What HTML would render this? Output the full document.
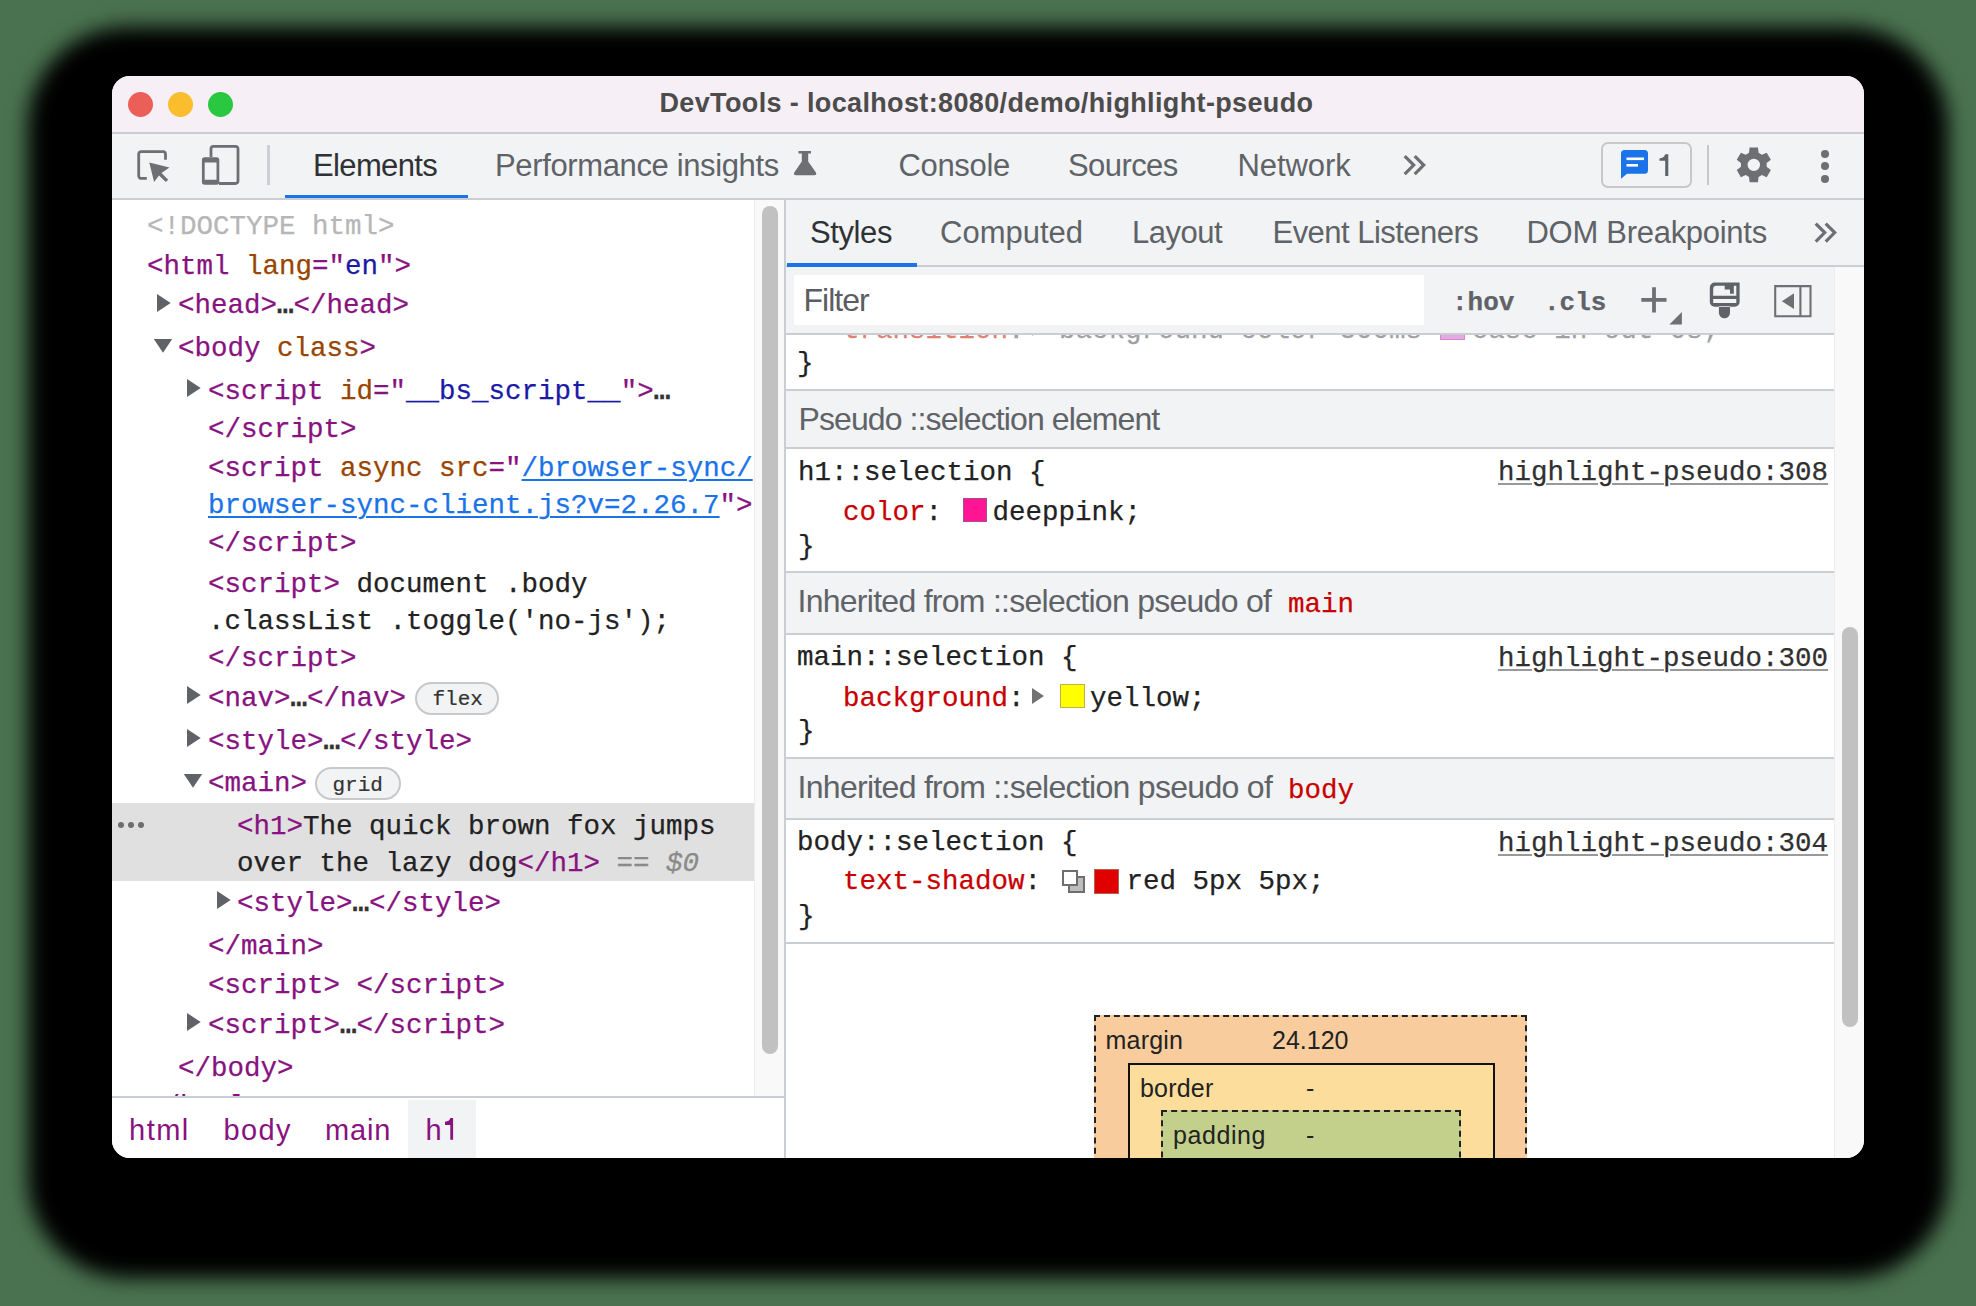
<!DOCTYPE html>
<html><head><meta charset="utf-8">
<style>
*{margin:0;padding:0;box-sizing:border-box}
html,body{width:1976px;height:1306px;overflow:hidden;background:#4a7250}
body{position:relative;font-family:"Liberation Sans",sans-serif}
.shadow{position:absolute;left:27.5px;top:27px;width:1920.5px;height:1251px;border-radius:100px;background:#000;filter:blur(10px)}
.win{position:absolute;left:112px;top:76px;width:1752px;height:1082px;border-radius:18px;overflow:hidden;background:#fff}
.a{position:absolute}
.m{position:absolute;font-family:"Liberation Mono",monospace;font-size:27.5px;line-height:32px;white-space:pre;color:#222;-webkit-text-stroke:0.25px currentColor}
.s{position:absolute;line-height:34px;white-space:pre;font-family:"Liberation Sans",sans-serif}
.b{font-weight:bold}
.tg{color:#881280}.at{color:#994500}.av{color:#1a1aa6}.gr{color:#b6b6b6}.tx{color:#222}
.el{color:#333;font-weight:bold}
.ln{color:#1a73e8;text-decoration:underline;text-decoration-thickness:2px;text-underline-offset:3px}
.gr2{color:#8a8a8a}.it{font-style:italic}
.pr{color:#c80000}.pr2{color:#e08070}.gr3{color:#a0a0a0}
.src{color:#303030;text-decoration:underline;text-decoration-color:#999;text-decoration-thickness:2px;text-underline-offset:3px}
.sw{background:#e4a8e0}
.badge{position:absolute;border:2px solid #c8c8c8;border-radius:17px;background:#f1f3f4;font-family:"Liberation Mono",monospace;font-size:21px;line-height:32px;color:#333;white-space:pre;-webkit-text-stroke:0.2px #333}
</style></head><body>
<div class="shadow"></div>
<div class="win">
<div class="a" style="left:0px;top:0px;width:1752px;height:56px;background:#f6f0f6"></div><div class="a" style="left:0px;top:56px;width:1752px;height:1.5px;background:#cbcdd0"></div><div class="a" style="left:0px;top:57.5px;width:1752px;height:64.5px;background:#f1f3f4"></div><div class="a" style="left:0px;top:122px;width:1752px;height:2px;background:#cacdd1"></div><div class="a" style="left:15.5px;top:15.5px;width:25px;height:25px;border-radius:50%;background:#ec5f58"></div><div class="a" style="left:55.5px;top:15.5px;width:25px;height:25px;border-radius:50%;background:#f9bd2e"></div><div class="a" style="left:95.5px;top:15.5px;width:25px;height:25px;border-radius:50%;background:#29c840"></div><div id="t1" class="s" style="left:547.50px;top:10px;font-size:27px;color:#4c4c4c;font-weight:bold;letter-spacing:0.358px;">DevTools - localhost:8080/demo/highlight-pseudo</div><svg class="a" style="left:18px;top:64px" width="50" height="50" viewBox="130 140 50 50"><path d="M146.8 178.4 H141.3 a2.6 2.6 0 0 1 -2.6 -2.6 V154.2 a2.6 2.6 0 0 1 2.6 -2.6 H162.9 a2.6 2.6 0 0 1 2.6 2.6 V159.7" fill="none" stroke="#6e6f73" stroke-width="2.8"/>
<path d="M149.3 162.5 L169.5 167.4 L161.5 173 L168.2 179.7 L165.8 182.1 L159 175.4 L154.1 182 Z" fill="#6e6f73"/></svg><svg class="a" style="left:83px;top:64px" width="50" height="50" viewBox="195 140 50 50"><path d="M211 157 V148.8 a2.5 2.5 0 0 1 2.5 -2.5 H235.5 a2.5 2.5 0 0 1 2.5 2.5 V181 a2.5 2.5 0 0 1 -2.5 2.5 H219" fill="none" stroke="#6e6f73" stroke-width="2.8"/>
<path d="M205 157.3 H216.5 a2.8 2.8 0 0 1 2.8 2.8 V182 a2.8 2.8 0 0 1 -2.8 2.8 H204.7 a2.8 2.8 0 0 1 -2.8 -2.8 V160.1 a2.8 2.8 0 0 1 2.8 -2.8 Z M204.7 162.6 V179.8 H216.5 V162.6 Z" fill="#6e6f73" fill-rule="evenodd"/></svg><div class="a" style="left:155px;top:69px;width:3px;height:40px;background:#cdcfd2"></div><div id="t2" class="s" style="left:201.00px;top:73px;font-size:31px;color:#303134;font-weight:normal;letter-spacing:-0.643px;">Elements</div><div class="a" style="left:173px;top:119px;width:183px;height:3px;background:#1a73e8"></div><div id="t3" class="s" style="left:383.00px;top:73px;font-size:31px;color:#5f6368;font-weight:normal;letter-spacing:-0.367px;">Performance insights</div><svg class="a" style="left:678px;top:72px" width="32" height="32" viewBox="790 148 32 32"><path d="M798.5 151 H811 V153.4 H808.2 V161.5 L815.6 172 Q817.5 175.2 814 175.2 H796.2 Q792.7 175.2 794.6 172 L801.8 161.5 V153.4 H798.5 Z" fill="#6e6f73"/></svg><div id="t4" class="s" style="left:786.50px;top:73px;font-size:31px;color:#5f6368;font-weight:normal;letter-spacing:-0.334px;">Console</div><div id="t5" class="s" style="left:956.00px;top:73px;font-size:31px;color:#5f6368;font-weight:normal;letter-spacing:-0.583px;">Sources</div><div id="t6" class="s" style="left:1125.50px;top:73px;font-size:31px;color:#5f6368;font-weight:normal;letter-spacing:-0.083px;">Network</div><svg class="a" style="left:1286px;top:74px" width="36" height="30" viewBox="1398 150 36 30"><path d="M1404.7 156.1 L1413.7 165.1 L1404.7 174.1 M1414.7 156.1 L1423.7 165.1 L1414.7 174.1" fill="none" stroke="#6e6f73" stroke-width="3.2"/></svg><div class="a" style="left:1489px;top:66px;width:91px;height:46px;border:2.5px solid #c6c8cb;border-radius:7px"></div><svg class="a" style="left:1506px;top:70px" width="34" height="36" viewBox="1618 146 34 36"><path d="M1624.5 150 H1644.5 a3.5 3.5 0 0 1 3.5 3.5 V170.3 a3.5 3.5 0 0 1 -3.5 3.5 H1627 L1621 178.8 V153.5 a3.5 3.5 0 0 1 3.5 -3.5 Z" fill="#1a73e8"/><rect x="1626.5" y="157.5" width="17.5" height="2.6" fill="#fff"/><rect x="1626.5" y="164" width="11.5" height="2.6" fill="#fff"/></svg><svg class="a" style="left:1543px;top:74px" width="20" height="30" viewBox="1655 150 20 30"><path d="M1665.2 154.2 H1668.3 V176 H1665.2 V160.8 H1659.5 V158.2 Q1664 158 1665.2 154.2 Z" fill="#5f6368"/></svg><div class="a" style="left:1595px;top:69px;width:2px;height:40px;background:#c6c8cb"></div><svg class="a" style="left:1618px;top:65px" width="48" height="48" viewBox="1730 141 48 48"><path d="M1749.01 152.81 L1749.64 147.59 L1757.96 147.59 L1758.59 152.81 L1761.87 154.71 L1766.71 152.65 L1770.87 159.84 L1766.66 163.00 L1766.66 166.80 L1770.87 169.96 L1766.71 177.15 L1761.87 175.09 L1758.59 176.99 L1757.96 182.21 L1749.64 182.21 L1749.01 176.99 L1745.73 175.09 L1740.89 177.15 L1736.73 169.96 L1740.94 166.80 L1740.94 163.00 L1736.73 159.84 L1740.89 152.65 L1745.73 154.71 Z M1760.0 164.9 A6.2 6.2 0 1 0 1747.6 164.9 A6.2 6.2 0 1 0 1760.0 164.9 Z" fill="#6e6f73" fill-rule="evenodd"/></svg><div class="a" style="left:1709px;top:73.5px;width:8px;height:8px;border-radius:50%;background:#6e6f73"></div><div class="a" style="left:1709px;top:86px;width:8px;height:8px;border-radius:50%;background:#6e6f73"></div><div class="a" style="left:1709px;top:98.5px;width:8px;height:8px;border-radius:50%;background:#6e6f73"></div><div class="a" style="left:0px;top:124px;width:672px;height:898px;background:#fff"></div><div class="a" style="left:642px;top:124px;width:30px;height:898px;background:#f9f9fa;border-left:1px solid #ececec"></div><div class="a" style="left:650px;top:130px;width:16px;height:848px;border-radius:8px;background:#c1c1c1"></div><div class="a" style="left:672px;top:124px;width:2px;height:958px;background:#cacdd1"></div><div class="a" style="left:0px;top:727px;width:642px;height:78px;background:#e0e0e0"></div><div class="a" style="left:5.799999999999997px;top:745.5px;width:6.6px;height:6.6px;border-radius:50%;background:#6e6e6e"></div><div class="a" style="left:15.899999999999991px;top:745.5px;width:6.6px;height:6.6px;border-radius:50%;background:#6e6e6e"></div><div class="a" style="left:25.899999999999977px;top:745.5px;width:6.6px;height:6.6px;border-radius:50%;background:#6e6e6e"></div><div class="m" style="left:35px;top:135px;"><span class="gr">&lt;!DOCTYPE html&gt;</span></div><div class="m" style="left:35px;top:175px;"><span class="tg">&lt;html</span> <span class="at">lang</span><span class="tg">="</span><span class="av">en</span><span class="tg">"&gt;</span></div><svg class="a" style="left:44px;top:218px" width="16" height="19" viewBox="0 0 16 19"><path d="M1 0 L14.7 9 L1 18 Z" fill="#5f6368"/></svg><div class="m" style="left:66px;top:214px;"><span class="tg">&lt;head&gt;</span><span class="el">…</span><span class="tg">&lt;/head&gt;</span></div><svg class="a" style="left:41px;top:262px" width="20" height="16" viewBox="0 0 20 16"><path d="M0.8 1 L19.2 1 L10 14.8 Z" fill="#5f6368"/></svg><div class="m" style="left:66px;top:257px;"><span class="tg">&lt;body</span> <span class="at">class</span><span class="tg">&gt;</span></div><svg class="a" style="left:74px;top:303px" width="16" height="19" viewBox="0 0 16 19"><path d="M1 0 L14.7 9 L1 18 Z" fill="#5f6368"/></svg><div class="m" style="left:96px;top:300px;"><span class="tg">&lt;script</span> <span class="at">id</span><span class="tg">="</span><span class="av">__bs_script__</span><span class="tg">"&gt;</span><span class="el">…</span></div><div class="m" style="left:96px;top:338px;"><span class="tg">&lt;/script&gt;</span></div><div class="m" style="left:96px;top:377px;"><span class="tg">&lt;script</span> <span class="at">async</span> <span class="at">src</span><span class="tg">="</span><span class="ln">/browser-sync/</span></div><div class="m" style="left:96px;top:414px;"><span class="ln">browser-sync-client.js?v=2.26.7</span><span class="tg">"&gt;</span></div><div class="m" style="left:96px;top:452px;"><span class="tg">&lt;/script&gt;</span></div><div class="m" style="left:96px;top:493px;"><span class="tg">&lt;script&gt;</span><span class="tx"> document .body</span></div><div class="m" style="left:96px;top:530px;"><span class="tx">.classList .toggle('no-js');</span></div><div class="m" style="left:96px;top:567px;"><span class="tg">&lt;/script&gt;</span></div><svg class="a" style="left:74px;top:610px" width="16" height="19" viewBox="0 0 16 19"><path d="M1 0 L14.7 9 L1 18 Z" fill="#5f6368"/></svg><div class="m" style="left:96px;top:607px;"><span class="tg">&lt;nav&gt;</span><span class="el">…</span><span class="tg">&lt;/nav&gt;</span></div><div class="badge" style="left:303px;top:606px;width:84px;height:33px"><span style="position:absolute;left:15.5px;top:0.3px">flex</span></div><svg class="a" style="left:74px;top:653px" width="16" height="19" viewBox="0 0 16 19"><path d="M1 0 L14.7 9 L1 18 Z" fill="#5f6368"/></svg><div class="m" style="left:96px;top:650px;"><span class="tg">&lt;style&gt;</span><span class="el">…</span><span class="tg">&lt;/style&gt;</span></div><svg class="a" style="left:71px;top:697px" width="20" height="16" viewBox="0 0 20 16"><path d="M0.8 1 L19.2 1 L10 14.8 Z" fill="#5f6368"/></svg><div class="m" style="left:96px;top:692px;"><span class="tg">&lt;main&gt;</span></div><div class="badge" style="left:202.5px;top:691px;width:86px;height:33px"><span style="position:absolute;left:16px;top:1.1px">grid</span></div><div class="m" style="left:125px;top:735px;"><span class="tg">&lt;h1&gt;</span><span class="tx">The quick brown fox jumps</span></div><div class="m" style="left:125px;top:772px;"><span class="tx">over the lazy dog</span><span class="tg">&lt;/h1&gt;</span><span class="gr2"> == </span><span class="gr2 it">$0</span></div><svg class="a" style="left:104px;top:815px" width="16" height="19" viewBox="0 0 16 19"><path d="M1 0 L14.7 9 L1 18 Z" fill="#5f6368"/></svg><div class="m" style="left:125px;top:812px;"><span class="tg">&lt;style&gt;</span><span class="el">…</span><span class="tg">&lt;/style&gt;</span></div><div class="m" style="left:96px;top:855px;"><span class="tg">&lt;/main&gt;</span></div><div class="m" style="left:96px;top:894px;"><span class="tg">&lt;script&gt;</span> <span class="tg">&lt;/script&gt;</span></div><svg class="a" style="left:74px;top:937px" width="16" height="19" viewBox="0 0 16 19"><path d="M1 0 L14.7 9 L1 18 Z" fill="#5f6368"/></svg><div class="m" style="left:96px;top:934px;"><span class="tg">&lt;script&gt;</span><span class="el">…</span><span class="tg">&lt;/script&gt;</span></div><div class="m" style="left:66px;top:977px;"><span class="tg">&lt;/body&gt;</span></div><div class="m" style="left:35px;top:1015px;"><span class="tg">&lt;/html&gt;</span></div><div class="a" style="left:0px;top:1020px;width:672px;height:2px;background:#cacdd1"></div><div class="a" style="left:0px;top:1022px;width:672px;height:60px;background:#fff"></div><div class="a" style="left:296px;top:1024px;width:68px;height:58px;background:#f1f3f4"></div><div id="t7" class="s" style="left:17.00px;top:1037px;font-size:29px;color:#881280;font-weight:normal;letter-spacing:1.501px;">html</div><div id="t8" class="s" style="left:111.50px;top:1037px;font-size:29px;color:#881280;font-weight:normal;letter-spacing:1.334px;">body</div><div id="t9" class="s" style="left:213.00px;top:1037px;font-size:29px;color:#881280;font-weight:normal;letter-spacing:0.833px;">main</div><div id="t10" class="s" style="left:313.50px;top:1037px;font-size:29px;color:#881280;font-weight:normal;letter-spacing:-2.000px;">h</div><svg class="a" style="left:328px;top:1036px" width="20" height="32" viewBox="440 1112 20 32"><path d="M450.3 1118.1 H453.1 V1139.8 H450.3 V1124.9 H445 V1121.8 Q449.5 1121.5 450.3 1118.1 Z" fill="#881280"/></svg><div class="a" style="left:674px;top:124px;width:1078px;height:65px;background:#f1f3f4"></div><div class="a" style="left:674px;top:189px;width:1078px;height:2px;background:#cacdd1"></div><div class="a" style="left:675px;top:187px;width:130px;height:4px;background:#1a73e8"></div><div id="t11" class="s" style="left:698.00px;top:140px;font-size:31px;color:#303134;font-weight:normal;letter-spacing:-0.400px;">Styles</div><div id="t12" class="s" style="left:828.00px;top:140px;font-size:31px;color:#5f6368;font-weight:normal;letter-spacing:-0.001px;">Computed</div><div id="t13" class="s" style="left:1020.00px;top:140px;font-size:31px;color:#5f6368;font-weight:normal;letter-spacing:-0.500px;">Layout</div><div id="t14" class="s" style="left:1160.50px;top:140px;font-size:31px;color:#5f6368;font-weight:normal;letter-spacing:-0.534px;">Event Listeners</div><div id="t15" class="s" style="left:1414.50px;top:140px;font-size:31px;color:#5f6368;font-weight:normal;letter-spacing:-0.285px;">DOM Breakpoints</div><svg class="a" style="left:1698px;top:142px" width="36" height="30" viewBox="1810 218 36 30"><path d="M1815.7 223.6 L1824.7 232.6 L1815.7 241.6 M1825.7 223.6 L1834.7 232.6 L1825.7 241.6" fill="none" stroke="#6e6f73" stroke-width="3.2"/></svg><div class="a" style="left:674px;top:191px;width:1048px;height:891px;background:#fff"></div><div class="a" style="left:1722px;top:191px;width:30px;height:891px;background:#f9f9fa;border-left:1px solid #ececec"></div><div class="a" style="left:1730px;top:551px;width:16px;height:400px;border-radius:8px;background:#c1c1c1"></div><div class="m" style="left:731px;top:239px;"><span class="pr2">transition</span><span class="gr3">:</span></div><svg class="a" style="left:916px;top:242px" width="20" height="24" viewBox="1028 318 20 24"><path d="M1032 320 L1044 328 L1032 336 Z" fill="#b0b0b0"/></svg><div class="m" style="left:947px;top:239px;"><span class="gr3">background-color 300ms</span></div><div class="a" style="left:1328px;top:240px;width:25px;height:24px;background:#e3a9e0;border:1.5px solid #d08ad0"></div><div class="m" style="left:1359.8px;top:239px;"><span class="gr3">ease-in-out 0s;</span></div><div class="a" style="left:674px;top:191px;width:1048px;height:66px;background:#f1f3f4"></div><div class="a" style="left:674px;top:257px;width:1048px;height:2px;background:#cacdd1"></div><div class="a" style="left:682px;top:199px;width:630px;height:50px;background:#fff"></div><div id="t16" class="s" style="left:691.50px;top:207px;font-size:32px;color:#5a5d62;font-weight:normal;letter-spacing:-1.000px;">Filter</div><div class="m b" style="left:1340px;top:211px;color:#5f6368;font-size:26px">:hov</div><div class="m b" style="left:1432px;top:211px;color:#5f6368;font-size:26px">.cls</div><svg class="a" style="left:1524px;top:206px" width="50" height="44" viewBox="1636 282 50 44"><path d="M1654 287.3 V312.5 M1641.3 299.8 H1666.5" stroke="#6e6f73" stroke-width="3.8" fill="none"/><path d="M1669.4 324.5 L1681.9 312 L1681.9 324.5 Z" fill="#6e6f73"/></svg><svg class="a" style="left:1592px;top:202px" width="40" height="44" viewBox="1704 278 40 44"><path d="M1714.8 282.5 H1739.6 V302 a4.7 4.7 0 0 1 -4.7 4.7 H1714.5 a4.7 4.7 0 0 1 -4.7 -4.7 V287.5 a5 5 0 0 1 5 -5 Z M1716.5 285.8 H1724.7 V289.4 H1730 V293.8 H1733.8 V285.8 H1736.3 V295.7 H1713.2 V289.1 a3.3 3.3 0 0 1 3.3 -3.3 Z M1713.2 299 H1736.3 V302.9 H1713.2 Z M1718.9 306 H1730 V312.8 a5.55 5.55 0 0 1 -11.1 0 Z" fill="#5f6368" fill-rule="evenodd"/></svg><svg class="a" style="left:1658px;top:204px" width="48" height="42" viewBox="1770 280 48 42"><path d="M1775.2 286.1 H1810.5 V316.3 H1775.2 Z M1800.4 286.1 V316.3" fill="none" stroke="#6e6f73" stroke-width="2.1"/><path d="M1794 293.3 L1781.9 301.2 L1794 309.1 Z" fill="#6e6f73"/></svg><div class="m" style="left:685px;top:272px;"><span class="tx">}</span></div><div class="a" style="left:674px;top:313px;width:1048px;height:2px;background:#cacdd1"></div><div class="a" style="left:674px;top:315px;width:1048px;height:56px;background:#f1f3f4"></div><div id="t17" class="s" style="left:686.50px;top:326px;font-size:32px;color:#5f6368;font-weight:normal;letter-spacing:-0.900px;">Pseudo ::selection element</div><div class="a" style="left:674px;top:371px;width:1048px;height:2px;background:#cacdd1"></div><div class="m" style="left:686px;top:381px;"><span class="tx">h1::selection {</span></div><div class="m" style="left:1386px;top:381px;"><span class="src">highlight-pseudo:308</span></div><div class="m" style="left:731px;top:421px;"><span class="pr">color</span><span class="tx">: </span></div><div class="a" style="left:850.5px;top:421.5px;width:24.5px;height:24.0px;background:#ff1493;border:1.5px solid #a0509a"></div><div class="m" style="left:880.5px;top:421px;"><span class="tx">deeppink;</span></div><div class="m" style="left:686px;top:455px;"><span class="tx">}</span></div><div class="a" style="left:674px;top:495px;width:1048px;height:2px;background:#cacdd1"></div><div class="a" style="left:674px;top:497px;width:1048px;height:60px;background:#f1f3f4"></div><div id="t18" class="s" style="left:685.50px;top:508px;font-size:32px;color:#5f6368;font-weight:normal;letter-spacing:-0.728px;">Inherited from ::selection pseudo of</div><div class="m" style="left:1176px;top:513px;"><span class="pr">main</span></div><div class="a" style="left:674px;top:557px;width:1048px;height:2px;background:#cacdd1"></div><div class="m" style="left:685px;top:566px;"><span class="tx">main::selection {</span></div><div class="m" style="left:1386px;top:567px;"><span class="src">highlight-pseudo:300</span></div><div class="m" style="left:731px;top:607px;"><span class="pr">background</span><span class="tx">:</span></div><svg class="a" style="left:918px;top:610px" width="16" height="20" viewBox="1030 686 16 20"><path d="M1032 688 L1044 696 L1032 704 Z" fill="#727272"/></svg><div class="a" style="left:948px;top:608px;width:24.5px;height:24px;background:#ffff00;border:1.5px solid #c8b040"></div><div class="m" style="left:978px;top:607px;"><span class="tx">yellow;</span></div><div class="m" style="left:686px;top:640px;"><span class="tx">}</span></div><div class="a" style="left:674px;top:681px;width:1048px;height:2px;background:#cacdd1"></div><div class="a" style="left:674px;top:683px;width:1048px;height:59px;background:#f1f3f4"></div><div id="t19" class="s" style="left:685.50px;top:694px;font-size:32px;color:#5f6368;font-weight:normal;letter-spacing:-0.701px;">Inherited from ::selection pseudo of</div><div class="m" style="left:1176px;top:699px;"><span class="pr">body</span></div><div class="a" style="left:674px;top:742px;width:1048px;height:2px;background:#cacdd1"></div><div class="m" style="left:685px;top:751px;"><span class="tx">body::selection {</span></div><div class="m" style="left:1386px;top:752px;"><span class="src">highlight-pseudo:304</span></div><div class="m" style="left:731px;top:790px;"><span class="pr">text-shadow</span><span class="tx">:</span></div><svg class="a" style="left:946px;top:790px" width="30" height="30" viewBox="1058 866 30 30"><rect x="1063" y="871" width="14" height="14" fill="none" stroke="#6e6e6e" stroke-width="2"/><path d="M1077 877 H1084 V892 H1069 V885 H1077 Z" fill="#bdbdbd" stroke="#6e6e6e" stroke-width="2"/></svg><div class="a" style="left:982px;top:793px;width:25px;height:24.5px;background:#e00000;border:1.5px solid #b06050"></div><div class="m" style="left:1014.5px;top:790px;"><span class="tx">red 5px 5px;</span></div><div class="m" style="left:686px;top:825px;"><span class="tx">}</span></div><div class="a" style="left:674px;top:866px;width:1048px;height:2px;background:#cacdd1"></div><div class="a" style="left:982px;top:939px;width:433px;height:200px;background:#f9cc9d;border:2px dashed #222"></div><div class="a" style="left:1015.5px;top:987px;width:367px;height:160px;background:#fddd9b;border:2px solid #111"></div><div class="a" style="left:1049px;top:1034px;width:300px;height:120px;background:#c3d08b;border:2px dashed #222"></div><div id="t20" class="s" style="left:993.50px;top:947px;font-size:25px;color:#222;font-weight:normal;letter-spacing:0.200px;">margin</div><div id="t21" class="s" style="left:1160.00px;top:947px;font-size:25px;color:#222;font-weight:normal;">24.120</div><div id="t22" class="s" style="left:1028.00px;top:995px;font-size:25px;color:#222;font-weight:normal;letter-spacing:0.200px;">border</div><div id="t23" class="s" style="left:1194.00px;top:995px;font-size:25px;color:#222;font-weight:normal;">-</div><div id="t24" class="s" style="left:1061.00px;top:1042px;font-size:25px;color:#222;font-weight:normal;letter-spacing:0.582px;">padding</div><div id="t25" class="s" style="left:1194.00px;top:1042px;font-size:25px;color:#222;font-weight:normal;">-</div>
</div>
</body></html>
